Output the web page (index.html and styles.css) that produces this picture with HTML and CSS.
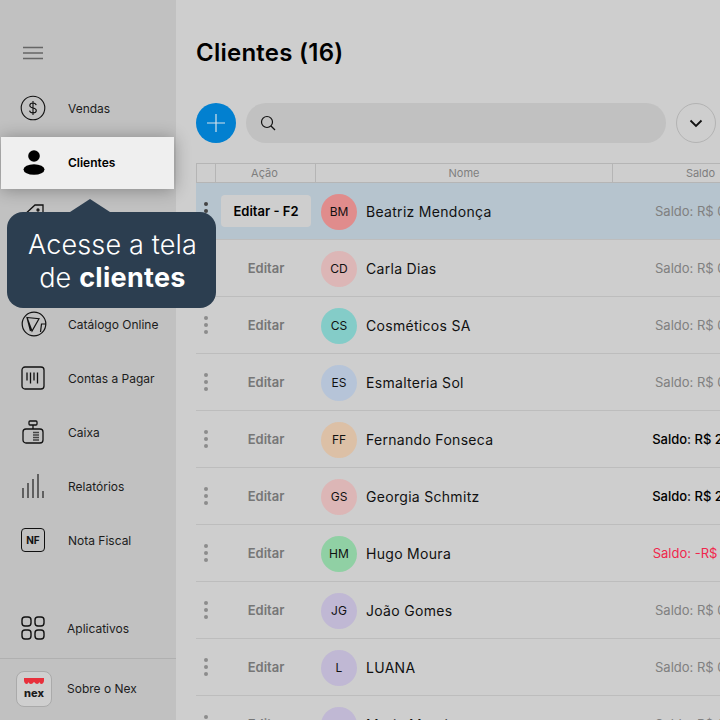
FILE: index.html
```html
<!DOCTYPE html>
<html lang="pt-BR">
<head>
    <meta charset="UTF-8">
    <title>Clientes</title>
    <link rel="stylesheet" href="styles.css">
</head>
<body>
<div class="app">
    <aside class="sidebar">
        <button class="menu-toggle">
            <svg width="20" height="14" viewBox="0 0 20 14"><path d="M0 1.500h20M0 7h20M0 12.500h20" stroke="#666" stroke-width="1.300"/></svg>
        </button>
        <nav class="menu">
            <a class="menu-item">
                <span class="menu-icon"><svg width="26" height="26" viewBox="0 0 26 26" fill="none" stroke="#111" stroke-width="1.100"><circle cx="13" cy="13" r="11.800"/><path d="M16.200 10.200c-.3-1.400-1.500-2.200-3.200-2.200-1.900 0-3.200 1-3.200 2.400 0 3.300 6.500 1.800 6.500 5 0 1.500-1.400 2.500-3.300 2.500-1.800 0-3.100-.8-3.400-2.300M13 6v14"/></svg></span>
                Vendas
            </a>
            <a class="menu-item active">
                <span class="menu-icon"><svg width="22" height="25" viewBox="0 0 22 25" fill="#000"><circle cx="11" cy="6" r="5.800"/><ellipse cx="11" cy="19.500" rx="10.500" ry="5.300"/></svg></span>
                Clientes
            </a>
            <a class="menu-item">
                <span class="menu-icon"><svg width="26" height="26" viewBox="0 0 26 26" fill="none" stroke="#111" stroke-width="1.300"><path d="M2 14L15 2h8v9L10 24z"/><circle cx="18" cy="7" r="1"/></svg></span>
                Produtos
            </a>
            <a class="menu-item">
                <span class="menu-icon"></span>
                Estoque
            </a>
            <a class="menu-item">
                <span class="menu-icon"><svg class="nudge" width="26" height="26" viewBox="0 0 26 26" fill="none" stroke="#111" stroke-width="1.200"><circle cx="13" cy="13" r="11.800"/><path d="M6 6.500l12 1.200-7 12.300zM6 6.500L9.500 20M25 13h-4.500l-1 8"/></svg></span>
                Catálogo Online
            </a>
            <a class="menu-item">
                <span class="menu-icon"><svg width="24" height="24" viewBox="0 0 24 24" fill="none" stroke="#111" stroke-width="1.300"><rect x="1" y="1" width="22" height="22" rx="3"/><path d="M6 6.500v8M9.500 6.500v11M13 6.500v8M16.500 6.500v11"/></svg></span>
                Contas a Pagar
            </a>
            <a class="menu-item">
                <span class="menu-icon"><svg width="22" height="24" viewBox="0 0 22 24" fill="none" stroke="#111" stroke-width="1.300"><rect x="7" y="1" width="8" height="4" rx="1"/><path d="M11 5v4"/><rect x="1" y="9" width="20" height="14" rx="3"/><path d="M11 12.500h6M11 15h6M11 17.500h6M11 20h6" stroke="#444"/></svg></span>
                Caixa
            </a>
            <a class="menu-item">
                <span class="menu-icon"><svg width="22" height="24" viewBox="0 0 22 24" fill="none" stroke="#222" stroke-width="1.200"><path d="M1 24v-10M6 24v-15M11 24v-19M16 24V0M21 24v-7"/></svg></span>
                Relatórios
            </a>
            <a class="menu-item">
                <span class="menu-icon"><span class="nf-icon">NF</span></span>
                Nota Fiscal
            </a>
        </nav>
        <a class="menu-item apps">
            <span class="menu-icon"><svg width="24" height="24" viewBox="0 0 24 24" fill="none" stroke="#111" stroke-width="1.400"><rect x="1" y="1" width="9" height="9" rx="3"/><rect x="14" y="1" width="9" height="9" rx="3"/><rect x="1" y="14" width="9" height="9" rx="3"/><rect x="14" y="14" width="9" height="9" rx="3"/></svg></span>
            Aplicativos
        </a>
        <div class="about">
            <span class="logo">
                <svg width="20" height="7" viewBox="0 0 20 7"><path d="M0 0h20v2.500c0 2-1.500 3.500-2.500 3.500s-1.800-.8-2.200-2c-.4 1.200-1.200 2-2.200 2S11.300 5.200 10 4c-1.300 1.200-1.600 2-3.100 2s-1.800-.8-2.200-2c-.4 1.200-1.200 2-2.200 2S0 4.500 0 2.500z" fill="#e8303c"/></svg>
                <span class="logo-text">nex</span>
            </span>
            Sobre o Nex
        </div>
    </aside>

    <div class="tooltip">Acesse a tela<br>de <strong>clientes</strong></div>

    <main class="content">
        <h1 class="title">Clientes (16)</h1>
        <div class="toolbar">
            <button class="add-btn"><svg width="20" height="20" viewBox="0 0 20 20"><path d="M10 1v18M1 10h18" stroke="#d6e2ea" stroke-width="1.200"/></svg></button>
            <div class="search"><svg width="16" height="16" viewBox="0 0 16 16" fill="none" stroke="#111" stroke-width="1.200"><circle cx="7" cy="7" r="5.500"/><path d="M11 11l4 4"/></svg></div>
            <button class="more-btn"><svg width="14" height="9" viewBox="0 0 14 9" fill="none" stroke="#111" stroke-width="1.800"><path d="M1.500 1.500L7 7l5.500-5.500"/></svg></button>
        </div>
        <div class="table">
            <div class="thead">
                <span></span><span>Ação</span><span>Nome</span><span>Saldo</span>
            </div>
            <div class="row selected">
                <span class="dots"><i></i><i></i><i></i></span>
                <span class="edit"><b class="edit-btn">Editar - F2</b></span>
                <span class="name"><span class="avatar red">BM</span>Beatriz Mendonça</span>
                <span class="saldo muted">Saldo: R$ 0,00</span>
            </div>
            <div class="row">
                <span class="dots"><i></i><i></i><i></i></span>
                <span class="edit">Editar</span>
                <span class="name"><span class="avatar pink">CD</span>Carla Dias</span>
                <span class="saldo muted">Saldo: R$ 0,00</span>
            </div>
            <div class="row">
                <span class="dots"><i></i><i></i><i></i></span>
                <span class="edit">Editar</span>
                <span class="name"><span class="avatar teal">CS</span>Cosméticos SA</span>
                <span class="saldo muted">Saldo: R$ 0,00</span>
            </div>
            <div class="row">
                <span class="dots"><i></i><i></i><i></i></span>
                <span class="edit">Editar</span>
                <span class="name"><span class="avatar blue">ES</span>Esmalteria Sol</span>
                <span class="saldo muted">Saldo: R$ 0,00</span>
            </div>
            <div class="row">
                <span class="dots"><i></i><i></i><i></i></span>
                <span class="edit">Editar</span>
                <span class="name"><span class="avatar tan">FF</span>Fernando Fonseca</span>
                <span class="saldo">Saldo: R$ 25,00</span>
            </div>
            <div class="row">
                <span class="dots"><i></i><i></i><i></i></span>
                <span class="edit">Editar</span>
                <span class="name"><span class="avatar pink">GS</span>Georgia Schmitz</span>
                <span class="saldo">Saldo: R$ 25,00</span>
            </div>
            <div class="row">
                <span class="dots"><i></i><i></i><i></i></span>
                <span class="edit">Editar</span>
                <span class="name"><span class="avatar green">HM</span>Hugo Moura</span>
                <span class="saldo negative">Saldo: -R$ 6,50</span>
            </div>
            <div class="row">
                <span class="dots"><i></i><i></i><i></i></span>
                <span class="edit">Editar</span>
                <span class="name"><span class="avatar purple">JG</span>João Gomes</span>
                <span class="saldo muted">Saldo: R$ 0,00</span>
            </div>
            <div class="row">
                <span class="dots"><i></i><i></i><i></i></span>
                <span class="edit">Editar</span>
                <span class="name"><span class="avatar purple">L</span>LUANA</span>
                <span class="saldo muted">Saldo: R$ 0,00</span>
            </div>
            <div class="row">
                <span class="dots"><i></i><i></i><i></i></span>
                <span class="edit">Editar</span>
                <span class="name"><span class="avatar purple">MM</span>Maria Moreira</span>
                <span class="saldo muted">Saldo: R$ 0,00</span>
            </div>
        </div>
    </main>
</div>
</body>
</html>
```

FILE: styles.css
```css
* {
    box-sizing: border-box;
}
body {
    margin: 0;
    font-family: Inter, "Liberation Sans", sans-serif;
    color: #000;
}
button {
    padding: 0;
    border: none;
    background: none;
}
.app {
    position: relative;
    display: flex;
    width: 720px;
    height: 720px;
    overflow: hidden;
    background-color: #cecece;
}

/* sidebar */
.sidebar {
    display: flex;
    flex-direction: column;
    flex-shrink: 0;
    width: 176px;
    background-color: #c1c1c1;
}
.menu-toggle {
    display: flex;
    align-items: center;
    justify-content: center;
    width: 20px;
    height: 14px;
    margin: 46px 0 21px 23px;
}
.menu {
    display: flex;
    flex-direction: column;
    flex-grow: 1;
}
.menu-item {
    display: flex;
    align-items: center;
    height: 54px;
    font-size: 12px;
    color: #1c1c1c;
    flex-shrink: 0;
}
.menu-icon {
    display: flex;
    align-items: center;
    justify-content: center;
    width: 68px;
    flex-shrink: 0;
    padding-right: 2px;
}
.menu-icon .nudge {
    margin-left: 1px;
}
.menu-item.active {
    width: 173px;
    height: 52px;
    margin: 2px 0 0 1px;
    padding-bottom: 2px;
    background-color: #efefef;
    font-weight: 600;
    color: #000;
    box-shadow: 0 1px 16px rgba(0, 0, 0, 0.32);
    position: relative;
}
.menu-item.active .menu-icon {
    width: 67px;
}
.nf-icon {
    display: flex;
    align-items: center;
    justify-content: center;
    width: 24px;
    height: 24px;
    border: 1.3px solid #111;
    border-radius: 4px;
    font-size: 10px;
    font-weight: 700;
    color: #111;
}
.apps {
    margin-bottom: 3px;
}
.apps .menu-icon {
    width: 67px;
}
.about {
    display: flex;
    align-items: center;
    gap: 15px;
    height: 62px;
    padding: 0 0 2px 16px;
    border-top: 1px solid #b0b0b0;
    font-size: 12px;
    color: #1c1c1c;
}
.logo {
    display: flex;
    flex-direction: column;
    align-items: center;
    justify-content: center;
    width: 36px;
    height: 36px;
    border: 1px solid #aaa;
    border-radius: 8px;
    background-color: #cfcfcf;
}
.logo-text {
    font-size: 11px;
    font-weight: 800;
    line-height: 12px;
    margin-top: 2px;
}

/* tooltip */
.tooltip {
    position: absolute;
    left: 7px;
    top: 212px;
    width: 209px;
    height: 96px;
    padding: 16px 0 0 2px;
    border-radius: 16px;
    background-color: #2c3e50;
    color: #fff;
    font-size: 27px;
    font-weight: 300;
    line-height: 33px;
    letter-spacing: 0.15px;
    text-align: center;
}
.tooltip::before {
    content: "";
    position: absolute;
    left: 63px;
    top: -13px;
    border-left: 20px solid transparent;
    border-right: 20px solid transparent;
    border-bottom: 13px solid #2c3e50;
}
.tooltip strong {
    font-weight: 700;
    letter-spacing: 0.3px;
}

/* main content */
.content {
    flex-grow: 1;
    min-width: 0;
    padding: 38px 0 0 20px;
}
.title {
    margin: 0 0 36px;
    font-size: 24px;
    font-weight: 600;
    line-height: 29px;
    letter-spacing: 0.25px;
}
.toolbar {
    display: flex;
    gap: 10px;
    height: 40px;
    margin-bottom: 20px;
}
.add-btn {
    display: flex;
    align-items: center;
    justify-content: center;
    width: 40px;
    height: 40px;
    border-radius: 50%;
    background-color: #0280d0;
}
.search {
    display: flex;
    align-items: center;
    width: 420px;
    height: 40px;
    padding-left: 14px;
    border-radius: 20px;
    background-color: #c1c1c1;
}
.more-btn {
    display: flex;
    align-items: center;
    justify-content: center;
    width: 40px;
    height: 40px;
    border: 1px solid #b3b3b3;
    border-radius: 50%;
}

/* table */
.table {
    width: 598px;
}
.thead,
.row {
    display: grid;
    grid-template-columns: 19px 100px 297px 182px;
}
.thead {
    grid-template-columns: 19px 100px 297px 176px;
    height: 20px;
    border-top: 1px solid #b5b5b5;
    border-bottom: 1px solid #b5b5b5;
    border-left: 1px solid #b5b5b5;
    font-size: 11px;
    color: #7e7e7e;
}
.thead span {
    border-right: 1px solid #b5b5b5;
    line-height: 18px;
    text-align: center;
}
.thead span:nth-child(2) {
    padding-right: 2px;
}
.row {
    align-items: center;
    height: 57px;
    border-bottom: 1px solid #bdbdbd;
    font-size: 14px;
}
.row.selected {
    background-color: #b6c4ce;
}
.dots {
    display: flex;
    flex-direction: column;
    align-items: center;
    gap: 3px;
}
.dots i {
    width: 4px;
    height: 4px;
    border-radius: 50%;
    background-color: #8c8c8c;
}
.selected .dots i {
    background-color: #444;
}
.edit {
    padding-left: 6px;
    padding-right: 4px;
    font-size: 13px;
    font-weight: 600;
    color: #767676;
    text-align: center;
}
.edit-btn {
    display: block;
    height: 32px;
    border-radius: 4px;
    background-color: #cecece;
    font-weight: 600;
    line-height: 32px;
    color: #000;
}
.name {
    display: flex;
    align-items: center;
    gap: 9px;
    padding: 1px 0 0 6px;
    letter-spacing: 0.3px;
    color: #111;
}
.avatar {
    display: flex;
    align-items: center;
    justify-content: center;
    width: 36px;
    height: 36px;
    border-radius: 50%;
    font-size: 12px;
    letter-spacing: 0;
    flex-shrink: 0;
}
.avatar.red { background-color: #e08c8c; }
.avatar.pink { background-color: #dcb6b6; }
.avatar.teal { background-color: #84ccc8; }
.avatar.blue { background-color: #b6c4d8; }
.avatar.tan { background-color: #dcc0a6; }
.avatar.green { background-color: #90d0a4; }
.avatar.purple { background-color: #c0b8d4; }
.saldo {
    padding-right: 3px;
    font-size: 13px;
    font-weight: 500;
    text-align: center;
    white-space: nowrap;
}
.saldo.muted {
    padding-right: 6px;
    font-weight: 400;
    color: #808080;
}
.saldo.negative {
    padding-right: 5px;
    font-weight: 400;
    color: #f0274d;
}
```
